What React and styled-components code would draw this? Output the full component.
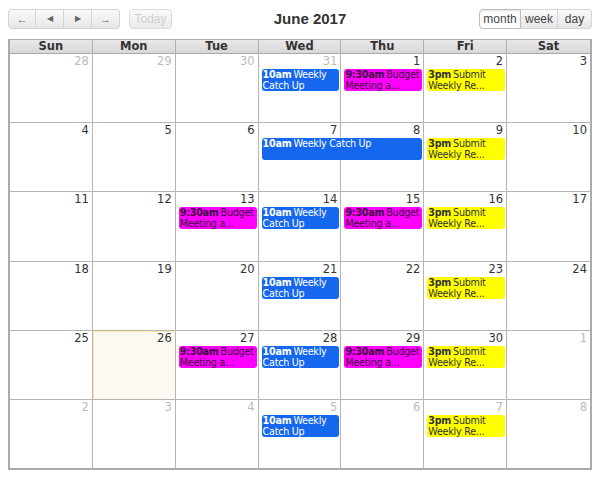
import React from "react";
import styled, { createGlobalStyle } from "styled-components";

const GlobalStyle = createGlobalStyle`
  body {
    margin: 8px;
    background: #fff;
    font-family: "DejaVu Sans", Verdana, sans-serif;
    color: #333;
  }
`;

const Toolbar = styled.div`
  display: grid;
  grid-template-columns: 1fr auto 1fr;
  align-items: start;
  height: 31px;
`;

const Left = styled.div`
  display: flex;
  align-items: center;
  gap: 9px;
  padding-top: 1px;
`;

const Right = styled.div`
  display: flex;
  justify-content: flex-end;
  padding-top: 1px;
`;

const Group = styled.div`
  display: flex;
`;

const Button = styled.button`
  height: 20px;
  width: ${(p) => p.$w}px;
  padding: 0;
  font-family: "Liberation Sans", Arial, sans-serif;
  font-size: 12px;
  color: ${(p) => (p.$disabled ? "#c4c4c4" : "#444")};
  background: ${(p) =>
    p.$active
      ? "#fff"
      : "linear-gradient(#fafafa, #e6e6e6)"};
  border: 1px solid ${(p) => (p.$active ? "#bcbcbc" : "#d4d4d4")};
  border-left-width: ${(p) => (p.$first || p.$alone ? 1 : 0)}px;
  border-radius: ${(p) =>
    p.$alone ? "4px" : p.$first ? "4px 0 0 4px" : p.$last ? "0 4px 4px 0" : "0"};
  box-shadow: ${(p) => (p.$active ? "inset 0 1px 2px rgba(0,0,0,0.12)" : "none")};
  opacity: ${(p) => (p.$disabled ? 0.8 : 1)};
  display: flex;
  align-items: center;
  justify-content: center;
`;

const Arrow = styled.span`
  font-size: ${(p) => p.$size}px;
  color: #666;
  line-height: 1;
`;

const Title = styled.h2`
  margin: 0 0 0 20px;
  font-family: "Liberation Sans", Arial, sans-serif;
  font-size: 15px;
  line-height: 22px;
  font-weight: bold;
  color: #333;
`;

const Month = styled.div`
  border: 2px solid #ababab;
  border-top-width: 1px;
`;

const HeadRow = styled.div`
  display: grid;
  grid-template-columns: repeat(7, 1fr);
  background: linear-gradient(#e9e9e9, #d6d6d6);
`;

const HeadCell = styled.div`
  text-align: center;
  font-size: 11.5px;
  font-weight: bold;
  line-height: 13px;
  border-right: ${(p) => (p.$last ? "none" : "1px solid #b0b0b0")};
  border-bottom: 1px solid #a9a9a9;
`;

const Week = styled.div`
  display: grid;
  grid-template-columns: repeat(7, 1fr);
  grid-template-rows: 14px auto 1fr;
  height: 68.2px;
  border-bottom: ${(p) => (p.$last ? "none" : "1px solid #b5b5b5")};
`;

const Cell = styled.div`
  grid-row: 1 / 4;
  grid-column: ${(p) => p.$col};
  border-right: ${(p) => (p.$col === 7 ? "none" : "1px solid #b5b5b5")};
  background: ${(p) => (p.$today ? "#fbf9f1" : "#fff")};
  box-shadow: ${(p) => (p.$today ? "inset 1px 1px 0 #fbe9a8" : "none")};
  text-align: right;
  padding: 1px 3px 0 0;
  font-size: 11.5px;
  line-height: 13px;
  color: ${(p) => (p.$other ? "#bbb" : "#333")};
`;

const EVENT_COLORS = {
  blue: { bg: "#1567ee", fg: "#fff" },
  pink: { bg: "#ff00ff", fg: "#3a0a3a" },
  yellow: { bg: "#ffff00", fg: "#333" },
};

const Event = styled.div`
  grid-row: 2;
  grid-column: ${(p) => p.$col} / span ${(p) => p.$span};
  margin: 1px 2px 0 3px;
  padding: 0 1px;
  border-radius: 3px;
  background: ${(p) => EVENT_COLORS[p.$color].bg};
  color: ${(p) => EVENT_COLORS[p.$color].fg};
  font-size: 9.6px;
  letter-spacing: -0.25px;
  line-height: 11px;
  overflow: hidden;
  z-index: 1;
`;

const Time = styled.b`
  font-weight: bold;
  margin-right: 2px;
`;

const weeks = [
  {
    days: [28, 29, 30, 31, 1, 2, 3],
    otherBefore: 4,
    events: [
      { col: 4, span: 1, color: "blue", time: "10am", title: "Weekly Catch Up" },
      { col: 5, span: 1, color: "pink", time: "9:30am", title: "Budget Meeting a..." },
      { col: 6, span: 1, color: "yellow", time: "3pm", title: "Submit Weekly Re..." },
    ],
  },
  {
    days: [4, 5, 6, 7, 8, 9, 10],
    events: [
      { col: 4, span: 2, color: "blue", time: "10am", title: "Weekly Catch Up" },
      { col: 6, span: 1, color: "yellow", time: "3pm", title: "Submit Weekly Re..." },
    ],
  },
  {
    days: [11, 12, 13, 14, 15, 16, 17],
    events: [
      { col: 3, span: 1, color: "pink", time: "9:30am", title: "Budget Meeting a..." },
      { col: 4, span: 1, color: "blue", time: "10am", title: "Weekly Catch Up" },
      { col: 5, span: 1, color: "pink", time: "9:30am", title: "Budget Meeting a..." },
      { col: 6, span: 1, color: "yellow", time: "3pm", title: "Submit Weekly Re..." },
    ],
  },
  {
    days: [18, 19, 20, 21, 22, 23, 24],
    events: [
      { col: 4, span: 1, color: "blue", time: "10am", title: "Weekly Catch Up" },
      { col: 6, span: 1, color: "yellow", time: "3pm", title: "Submit Weekly Re..." },
    ],
  },
  {
    days: [25, 26, 27, 28, 29, 30, 1],
    otherAfter: 6,
    today: 1,
    events: [
      { col: 3, span: 1, color: "pink", time: "9:30am", title: "Budget Meeting a..." },
      { col: 4, span: 1, color: "blue", time: "10am", title: "Weekly Catch Up" },
      { col: 5, span: 1, color: "pink", time: "9:30am", title: "Budget Meeting a..." },
      { col: 6, span: 1, color: "yellow", time: "3pm", title: "Submit Weekly Re..." },
    ],
  },
  {
    days: [2, 3, 4, 5, 6, 7, 8],
    otherAfter: 0,
    events: [
      { col: 4, span: 1, color: "blue", time: "10am", title: "Weekly Catch Up" },
      { col: 6, span: 1, color: "yellow", time: "3pm", title: "Submit Weekly Re..." },
    ],
  },
];

const dayNames = ["Sun", "Mon", "Tue", "Wed", "Thu", "Fri", "Sat"];

function isOther(week, i) {
  if (week.otherBefore !== undefined && i < week.otherBefore) return true;
  if (week.otherAfter !== undefined && i >= week.otherAfter) return true;
  return false;
}

export default function App() {
  return (
    <>
      <GlobalStyle />
      <Toolbar>
        <Left>
          <Group>
            <Button $w={28} $first><Arrow $size={11}>←</Arrow></Button>
            <Button $w={28}><Arrow $size={8}>◀</Arrow></Button>
            <Button $w={28}><Arrow $size={8}>▶</Arrow></Button>
            <Button $w={28} $last><Arrow $size={11}>→</Arrow></Button>
          </Group>
          <Button $w={43} $alone $disabled>Today</Button>
        </Left>
        <Title>June 2017</Title>
        <Right>
          <Group>
            <Button $w={42} $first $active>month</Button>
            <Button $w={37}>week</Button>
            <Button $w={34} $last>day</Button>
          </Group>
        </Right>
      </Toolbar>
      <Month>
        <HeadRow>
          {dayNames.map((d, i) => (
            <HeadCell key={d} $last={i === 6}>{d}</HeadCell>
          ))}
        </HeadRow>
        {weeks.map((week, wi) => (
          <Week key={wi} $last={wi === weeks.length - 1}>
            {week.days.map((d, i) => (
              <Cell
                key={i}
                $col={i + 1}
                $other={isOther(week, i)}
                $today={week.today === i}
              >
                {d}
              </Cell>
            ))}
            {week.events.map((ev, ei) => (
              <Event key={ei} $col={ev.col} $span={ev.span} $color={ev.color}>
                <Time>{ev.time}</Time>
                {ev.title}
              </Event>
            ))}
          </Week>
        ))}
      </Month>
    </>
  );
}
